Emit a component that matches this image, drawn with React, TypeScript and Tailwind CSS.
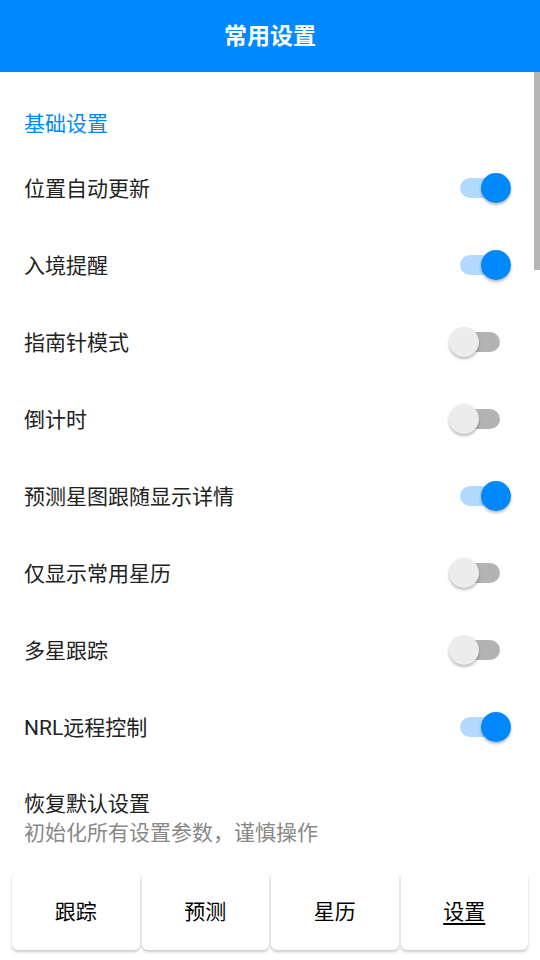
import React from "react";

const rows: { label: string; on: boolean }[] = [
  { label: "位置自动更新", on: true },
  { label: "入境提醒", on: true },
  { label: "指南针模式", on: false },
  { label: "倒计时", on: false },
  { label: "预测星图跟随显示详情", on: true },
  { label: "仅显示常用星历", on: false },
  { label: "多星跟踪", on: false },
  { label: "NRL远程控制", on: true },
];

function Toggle({ on }: { on: boolean }) {
  return (
    <div className="relative w-[40px] h-[20px] mr-[40px]">
      <div
        className={
          on
            ? "absolute inset-0 rounded-full bg-[#b3d9ff]"
            : "absolute inset-0 rounded-full bg-[#b3b3b3]"
        }
      />
      <div
        className={
          on
            ? "absolute top-[-5px] left-[21px] w-[30px] h-[30px] rounded-full bg-[#0088ff] shadow-[0_2px_3px_rgba(0,0,0,0.28)]"
            : "absolute top-[-5px] left-[-11px] w-[30px] h-[30px] rounded-full bg-[#ececec] shadow-[0_2px_3px_rgba(0,0,0,0.28)]"
        }
      />
    </div>
  );
}

export default function App() {
  const tabs = ["跟踪", "预测", "星历", "设置"];
  return (
    <div
      className="relative w-[540px] h-[960px] bg-white overflow-hidden"
      style={{ fontFamily: '"Roboto","Noto Sans CJK SC",sans-serif' }}
    >
      <div className="h-[72px] bg-[#0088ff] flex items-center justify-center">
        <span className="text-white text-[23px] font-bold leading-none">常用设置</span>
      </div>
      <div className="absolute left-[534px] top-[72px] w-[6px] h-[198px] bg-[#b5b5b5]" />
      <div className="h-[77px] pt-[26px] pl-[24px] flex items-center">
        <span className="text-[#0088ff] text-[21px] leading-[28px]">基础设置</span>
      </div>
      {rows.map((r) => (
        <div key={r.label} className="h-[77px] flex items-center justify-between pl-[24px]">
          <span className="text-[#222222] text-[21px] leading-[28px] mt-[3px]">{r.label}</span>
          <Toggle on={r.on} />
        </div>
      ))}
      <div className="pt-[25px] pl-[24px]">
        <div className="text-[#222222] text-[21px] leading-[29px]">恢复默认设置</div>
        <div className="text-[#888888] text-[21px] leading-[29px]">初始化所有设置参数，谨慎操作</div>
      </div>
      <div className="mt-[24px] px-[12px] flex gap-[2px]">
        {tabs.map((t, i) => (
          <div
            key={t}
            className="flex-1 h-[78px] rounded-[6px] bg-white shadow-[0_2px_3px_rgba(0,0,0,0.22)] flex items-center justify-center"
          >
            <span
              className={
                i === 3
                  ? "text-[21px] text-black underline underline-offset-[4px] mt-[3px]"
                  : "text-[21px] text-black mt-[3px]"
              }
            >
              {t}
            </span>
          </div>
        ))}
      </div>
    </div>
  );
}
